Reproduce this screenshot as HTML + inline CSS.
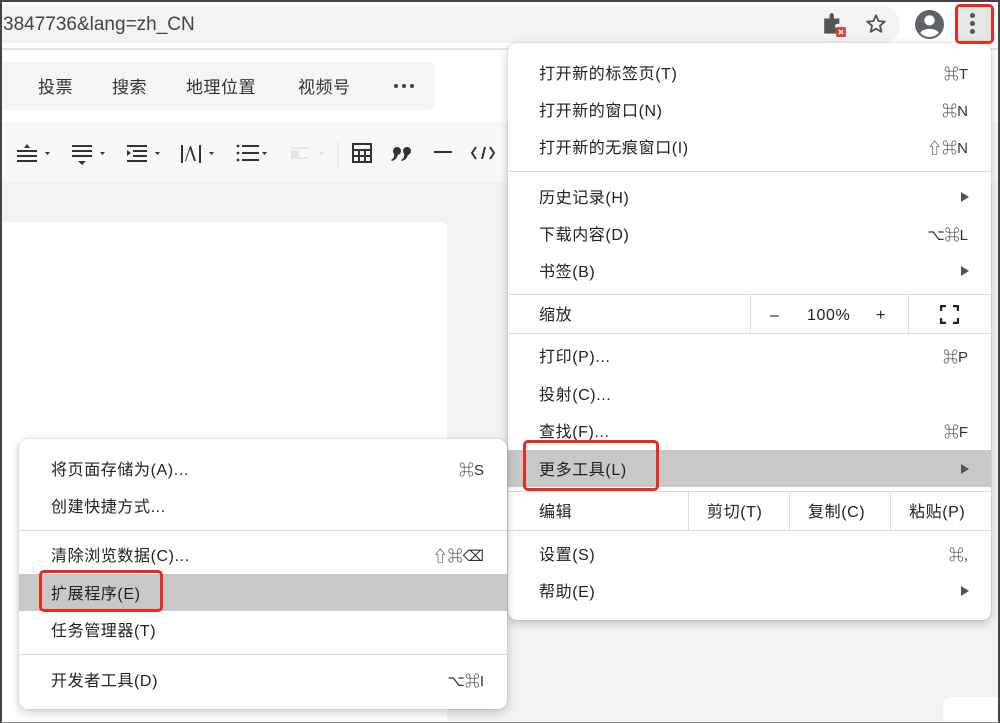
<!DOCTYPE html>
<html><head><meta charset="utf-8"><style>
*{margin:0;padding:0;box-sizing:border-box}
body{width:1000px;height:723px;overflow:hidden;position:relative;background:#f2f2f2;font-family:"Liberation Sans","Noto Sans CJK SC",sans-serif;color:#222}
.abs{position:absolute}
.frame{position:absolute;left:0;top:0;width:1000px;height:723px;border:2px solid #444;border-bottom:1px solid #888;z-index:50;pointer-events:none}
.menu{position:absolute;background:#fff;border-radius:9px;box-shadow:0 3px 10px rgba(0,0,0,.22),0 0 1px rgba(0,0,0,.3);z-index:10}
.it{position:absolute;left:0;right:0;height:37px;font-size:16px;line-height:41px;color:#222;letter-spacing:0.6px}
.it .k{position:absolute;right:23px;top:0;color:#333;font-size:15px;letter-spacing:0}
.it .ar{position:absolute;right:22px;top:14px;width:0;height:0;border-left:8px solid #555;border-top:5px solid transparent;border-bottom:5px solid transparent}
.sep{position:absolute;left:0;right:0;height:1px;background:#dcdcdc}
.hl{background:#c8c8c8}
.red{position:absolute;border:3px solid #ea2a1a;border-radius:5px;z-index:30}
.tb span{position:absolute;top:73px;font-size:17px;color:#333;letter-spacing:0.5px}
</style></head><body>
<div class="abs" style="left:0;top:0;width:1000px;height:48px;background:#fff"></div>
<div class="abs" style="left:0;top:6px;width:900px;height:37px;background:#f1f3f4;border-radius:0 19px 19px 0"></div>
<div class="abs" style="left:3px;top:14px;font-size:19px;color:#444">3847736&amp;lang=zh_CN</div>
<div class="abs" style="left:0;top:48px;width:1000px;height:2px;background:#e2e3e6"></div>
<svg class="abs" style="left:822px;top:12px" width="26" height="26" viewBox="0 0 24 24"><path d="M2 6h5V3a2 2 0 0 1 4 0v3h5v5h-2a2 2 0 0 0 0 4h2v5H2z" fill="#555"/><rect x="13" y="14" width="9" height="9" fill="#e03a2e"/><path d="M15.5 16.5l4 4M19.5 16.5l-4 4" stroke="#fff" stroke-width="1.4"/></svg>
<svg class="abs" style="left:865px;top:13px" width="22" height="22" viewBox="0 0 24 24"><path d="M12 2.5l2.8 6.3 6.8.6-5.2 4.5 1.6 6.7L12 17.1l-5.9 3.5 1.6-6.7L2.4 9.4l6.8-.6z" fill="none" stroke="#555" stroke-width="2" stroke-linejoin="round"/></svg>
<svg class="abs" style="left:914px;top:9px" width="31" height="31" viewBox="0 0 30 30"><circle cx="15" cy="15" r="14" fill="#5f6368"/><circle cx="15" cy="11" r="5" fill="#fff"/><path d="M6 23c3-5 15-5 18 0a12 12 0 0 1-18 0z" fill="#fff"/></svg>
<div class="abs" style="left:958px;top:7px;width:33px;height:34px;background:#e6e6e6;border-radius:4px"></div>
<div class="abs" style="left:970px;top:13px;width:5px;height:5px;border-radius:50%;background:#555;box-shadow:0 8px 0 #555,0 16px 0 #555"></div>
<div class="red" style="left:955px;top:4px;width:39px;height:40px"></div>

<div class="abs" style="left:0;top:50px;width:1000px;height:72px;background:#fff"></div>
<div class="abs" style="left:0;top:62px;width:434px;height:48px;background:#f5f5f5;border-radius:0 5px 5px 0"></div>
<div class="tb"><span style="left:38px">投票</span><span style="left:112px">搜索</span><span style="left:186px">地理位置</span><span style="left:298px">视频号</span></div>
<svg class="abs" style="left:393px;top:83px" width="24" height="6"><circle cx="3" cy="3" r="2" fill="#444"/><circle cx="11" cy="3" r="2" fill="#444"/><circle cx="19" cy="3" r="2" fill="#444"/></svg>
<div class="abs" style="left:0;top:122px;width:1000px;height:60px;background:#f8f8f8"></div>
<svg class="abs" style="left:0;top:135px" width="500" height="36" viewBox="0 0 500 36">
<g stroke="#333" stroke-width="2" fill="none">
<path d="M17 16h20M17 21h20M17 26h20"/><path d="M72 11h20M72 16h20M72 21h20"/><path d="M127 11h20M133 16h14M133 21h14M127 26h20"/><path d="M182 10v18M200 10v18"/><path d="M242 11h17M242 18h17M242 25h17"/><path d="M353 9h18v18h-18zM353 15h18M353 21h18M359 15v12M365 15v12"/><path d="M434 17h18"/><path d="M476 12l-4 6 4 6M482 24l3-12M490 12l4 6-4 6"/>
</g>
<g fill="#333"><path d="M27 9l-3 4h6z"/><path d="M78 26h8l-4 4z"/><path d="M127 15l4 3-4 3z"/><path d="M185 26l5-15h1l5 15h-2l-4-12-4 12z"/><circle cx="238" cy="11" r="1.4"/><circle cx="238" cy="18" r="1.4"/><circle cx="238" cy="25" r="1.4"/><circle cx="397" cy="16" r="4"/><circle cx="407" cy="16" r="4"/><path d="M394 18q1 5-3 7l1 1q6-2 6-8zM404 18q1 5-3 7l1 1q6-2 6-8z"/>
<path d="M45 17h5l-2.5 3zM100 17h5l-2.5 3zM155 17h5l-2.5 3zM209 17h5l-2.5 3zM262 17h5l-2.5 3z"/></g>
<path d="M291 13h18M291 23h18" stroke="#e6e6e6" stroke-width="2"/><rect x="291" y="15" width="8" height="7" fill="#e6e6e6"/><path d="M319 17h5l-2.5 3z" fill="#ddd"/>
<path d="M338 7v26" stroke="#ddd" stroke-width="1"/>
</svg>
<div class="abs" style="left:0;top:222px;width:447px;height:501px;background:#fff;border-radius:0 5px 0 0"></div>
<div class="abs" style="left:943px;top:697px;width:57px;height:26px;background:#fff;border-radius:8px 0 0 0"></div>

<div class="menu" style="left:508px;top:43px;width:483px;height:577px">
<div class="it" style="top:11px;padding-left:31px">打开新的标签页(T)<span class="k">⌘T</span></div>
<div class="it" style="top:48px;padding-left:31px">打开新的窗口(N)<span class="k">⌘N</span></div>
<div class="it" style="top:85px;padding-left:31px">打开新的无痕窗口(I)<span class="k">⇧⌘N</span></div>
<div class="sep" style="top:128px"></div>
<div class="it" style="top:135px;padding-left:31px">历史记录(H)<span class="ar"></span></div>
<div class="it" style="top:172px;padding-left:31px">下载内容(D)<span class="k">⌥⌘L</span></div>
<div class="it" style="top:209px;padding-left:31px">书签(B)<span class="ar"></span></div>
<div class="sep" style="top:251px"></div>
<div class="it" style="top:252px;height:38px;padding-left:31px">缩放
<span class="abs" style="left:242px;top:0;width:1px;height:38px;background:#dcdcdc"></span>
<span class="abs" style="left:262px">–</span><span class="abs" style="left:299px">100%</span><span class="abs" style="left:368px">+</span>
<span class="abs" style="left:400px;top:0;width:1px;height:38px;background:#dcdcdc"></span>
<svg class="abs" style="left:432px;top:10px" width="19" height="19" viewBox="0 0 19 19"><path d="M1 6V1h5M13 1h5v5M18 13v5h-5M6 18H1v-5" fill="none" stroke="#222" stroke-width="2.4"/></svg></div>
<div class="sep" style="top:290px"></div>
<div class="it" style="top:294px;padding-left:31px">打印(P)...<span class="k">⌘P</span></div>
<div class="it" style="top:332px;padding-left:31px">投射(C)...</div>
<div class="it" style="top:369px;padding-left:31px">查找(F)...<span class="k">⌘F</span></div>
<div class="it hl" style="top:407px;padding-left:31px">更多工具(L)<span class="ar"></span></div>
<div class="sep" style="top:448px"></div>
<div class="it" style="top:449px;height:38px;padding-left:31px">编辑
<span class="abs" style="left:180px;top:0;width:1px;height:38px;background:#dcdcdc"></span><span class="abs" style="left:199px">剪切(T)</span>
<span class="abs" style="left:281px;top:0;width:1px;height:38px;background:#dcdcdc"></span><span class="abs" style="left:300px">复制(C)</span>
<span class="abs" style="left:382px;top:0;width:1px;height:38px;background:#dcdcdc"></span><span class="abs" style="left:401px">粘贴(P)</span></div>
<div class="sep" style="top:487px"></div>
<div class="it" style="top:492px;padding-left:31px">设置(S)<span class="k">⌘,</span></div>
<div class="it" style="top:529px;padding-left:31px">帮助(E)<span class="ar"></span></div>
</div>
<div class="red" style="left:523px;top:440px;width:136px;height:51px"></div>

<div class="menu" style="left:19px;top:439px;width:488px;height:270px;z-index:20">
<div class="it" style="top:11px;padding-left:32px">将页面存储为(A)...<span class="k">⌘S</span></div>
<div class="it" style="top:48px;padding-left:32px">创建快捷方式...</div>
<div class="sep" style="top:91px"></div>
<div class="it" style="top:97px;padding-left:32px">清除浏览数据(C)...<span class="k">⇧⌘⌫</span></div>
<div class="it hl" style="top:135px;padding-left:32px">扩展程序(E)</div>
<div class="it" style="top:172px;padding-left:32px">任务管理器(T)</div>
<div class="sep" style="top:215px"></div>
<div class="it" style="top:222px;padding-left:32px">开发者工具(D)<span class="k">⌥⌘I</span></div>
</div>
<div class="red" style="left:39px;top:570px;width:124px;height:42px"></div>
<div class="frame"></div>
</body></html>
